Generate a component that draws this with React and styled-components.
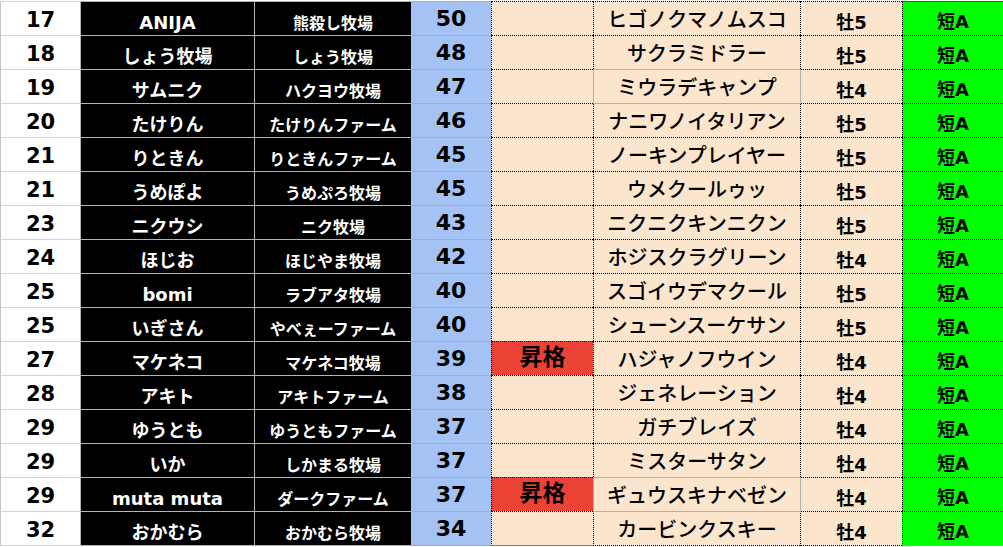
import React from 'react';
import styled, { createGlobalStyle, css } from 'styled-components';

const GlobalStyle = createGlobalStyle`
  html, body {
    margin: 0;
    padding: 0;
    background: #ffffff;
  }
  body {
    font-family: "DejaVu Sans", "Noto Sans CJK JP", sans-serif;
  }
`;

const ROWS = [
  { rank: 17, owner: 'ANIJA', farm: '熊殺し牧場', score: 50, horse: 'ヒゴノクマノムスコ', sex: '牡5' },
  { rank: 18, owner: 'しょう牧場', farm: 'しょう牧場', score: 48, horse: 'サクラミドラー', sex: '牡5' },
  { rank: 19, owner: 'サムニク', farm: 'ハクヨウ牧場', score: 47, horse: 'ミウラデキャンプ', sex: '牡4', boxed: true },
  { rank: 20, owner: 'たけりん', farm: 'たけりんファーム', score: 46, horse: 'ナニワノイタリアン', sex: '牡5' },
  { rank: 21, owner: 'りときん', farm: 'りときんファーム', score: 45, horse: 'ノーキンプレイヤー', sex: '牡5' },
  { rank: 21, owner: 'うめぽよ', farm: 'うめぷろ牧場', score: 45, horse: 'ウメクールゥッ', sex: '牡5' },
  { rank: 23, owner: 'ニクウシ', farm: 'ニク牧場', score: 43, horse: 'ニクニクキンニクン', sex: '牡5' },
  { rank: 24, owner: 'ほじお', farm: 'ほじやま牧場', score: 42, horse: 'ホジスクラグリーン', sex: '牡4' },
  { rank: 25, owner: 'bomi', farm: 'ラブアタ牧場', score: 40, horse: 'スゴイウデマクール', sex: '牡5' },
  { rank: 25, owner: 'いぎさん', farm: 'やべぇーファーム', score: 40, horse: 'シューンスーケサン', sex: '牡5' },
  { rank: 27, owner: 'マケネコ', farm: 'マケネコ牧場', score: 39, promo: true, horse: 'ハジャノフウイン', sex: '牡4' },
  { rank: 28, owner: 'アキト', farm: 'アキトファーム', score: 38, horse: 'ジェネレーション', sex: '牡4' },
  { rank: 29, owner: 'ゆうとも', farm: 'ゆうともファーム', score: 37, horse: 'ガチブレイズ', sex: '牡4' },
  { rank: 29, owner: 'いか', farm: 'しかまる牧場', score: 37, horse: 'ミスターサタン', sex: '牡4' },
  { rank: 29, owner: 'muta muta', farm: 'ダークファーム', score: 37, promo: true, horse: 'ギュウスキナベゼン', sex: '牡4', boxed: true },
  { rank: 32, owner: 'おかむら', farm: 'おかむら牧場', score: 34, horse: 'カービンクスキー', sex: '牡4' },
];

const Sheet = styled.div`
  display: grid;
  grid-template-columns: 80px 174px 157px 80px 102px 207px 102px 101px;
  grid-template-rows: repeat(15, 34px) 35px;
  width: 1003px;
  padding-top: 1px;
`;

// every cell sits on the bottom like a spreadsheet, nudged up by $pb
const Cell = styled.div`
  box-sizing: border-box;
  position: relative;
  display: flex;
  justify-content: center;
  align-items: flex-end;
  padding-bottom: ${p => p.$pb}px;
  line-height: 1;
  font-weight: 700;
  white-space: nowrap;
  ${p => p.$bottom && css`
    border-bottom: 1px ${p.$bottomStyle || 'solid'} ${p.$bottom};
  `}
`;

const RankCell = styled(Cell)`
  background: #ffffff;
  color: #000000;
  font-size: 21px;
  border-top: 1px solid #d4d4d4;
  border-left: 1px solid #c6c6c6;
`;

const OwnerCell = styled(Cell)`
  background: #000000;
  color: #ffffff;
  font-size: 18px;
  border-top: 1px solid #b4b4b4;
  border-left: 1px solid #b4b4b4;
`;

const FarmCell = styled(Cell)`
  background: #000000;
  color: #ffffff;
  font-size: 16px;
  border-top: 1px solid #b4b4b4;
  border-left: 1px solid #b4b4b4;
`;

const ScoreCell = styled(Cell)`
  background: #a4c2f4;
  color: #000000;
  font-size: 22px;
  border-top: 1px solid #8fb0e8;
`;

const PromoCell = styled(Cell)`
  background: ${p => (p.$promo ? '#ea4335' : '#fce5cd')};
  color: #000000;
  font-family: "Noto Sans CJK JP", sans-serif;
  font-size: 23px;
  border-top: 1px dotted #000000;
  border-left: 1px dotted #000000;
`;

const HorseCell = styled(Cell)`
  background: #fce5cd;
  color: #000000;
  font-family: "Noto Sans CJK JP", sans-serif;
  font-size: 20px;
  font-weight: 500;
  border-top: 1px ${p => (p.$afterBox ? 'solid #b0b0b0' : 'dotted #000000')};
  border-left: 1px dotted #000000;

  ${p => p.$boxed && css`
    &::after {
      content: '';
      position: absolute;
      top: -1px;
      left: -1px;
      right: -1px;
      bottom: -1px;
      border: 1px solid #b0b0b0;
      pointer-events: none;
      z-index: 1;
    }
  `}
`;

const SexCell = styled(Cell)`
  background: #fce5cd;
  color: #000000;
  font-size: 18px;
  border-top: 1px dotted #000000;
  border-left: 1px dotted #000000;
`;

const GradeCell = styled(Cell)`
  background: #00ff00;
  color: #000000;
  font-size: 18px;
  border-top: 1px ${p => (p.$first ? 'solid #ff0000' : 'dotted #000000')};
  border-left: 1px dotted #000000;
`;

export default function App() {
  return (
    <>
      <GlobalStyle />
      <Sheet>
        {ROWS.map((r, i) => {
          const last = i === ROWS.length - 1;
          const afterBox = i > 0 && ROWS[i - 1].boxed;
          return (
            <React.Fragment key={i}>
              <RankCell $pb={4} $bottom={last && '#d4d4d4'}>{r.rank}</RankCell>
              <OwnerCell $pb={3} $bottom={last && '#b4b4b4'}>{r.owner}</OwnerCell>
              <FarmCell $pb={3} $bottom={last && '#b4b4b4'}>{r.farm}</FarmCell>
              <ScoreCell $pb={5} $bottom={last && '#8fb0e8'}>{r.score}</ScoreCell>
              <PromoCell $pb={8} $promo={r.promo} $bottom={last && '#4a86e8'}>
                {r.promo ? '昇格' : null}
              </PromoCell>
              <HorseCell
                $pb={6}
                $boxed={r.boxed}
                $afterBox={afterBox}
                $bottom={last && '#000000'}
                $bottomStyle="dotted"
              >
                {r.horse}
              </HorseCell>
              <SexCell $pb={3} $bottom={last && '#000000'} $bottomStyle="dotted">{r.sex}</SexCell>
              <GradeCell $pb={4} $first={i === 0} $bottom={last && '#00e5ff'}>短A</GradeCell>
            </React.Fragment>
          );
        })}
      </Sheet>
    </>
  );
}
